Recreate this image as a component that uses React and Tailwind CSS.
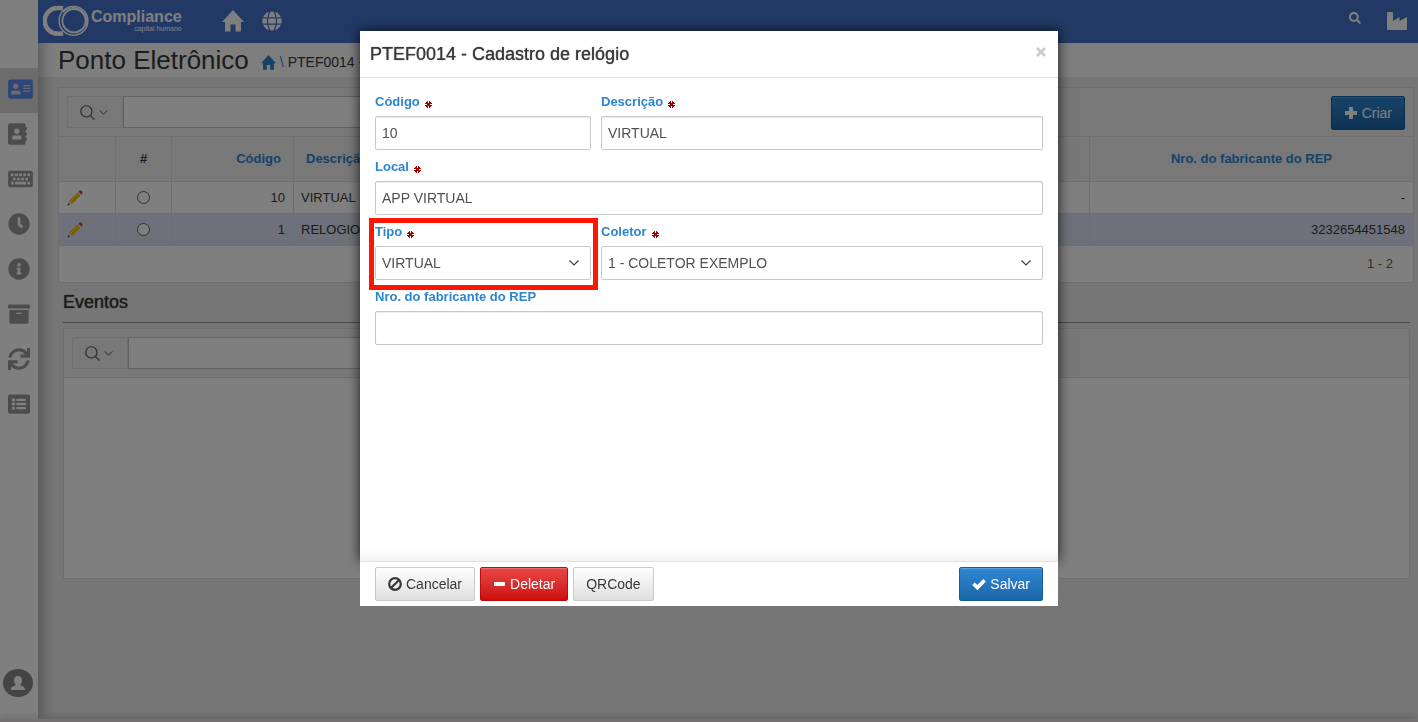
import {
  FaAddressBook,
  FaAddressCard,
  FaArchive,
  FaClock,
  FaGlobe,
  FaInfoCircle,
  FaKeyboard,
  FaListAlt,
  FaSearch,
  FaSync,
} from "react-icons/fa";

const menu = [
  { name: "Cadastros", icon: FaAddressCard, size: "h-[22px] w-[25px]", active: true },
  { name: "Contatos", icon: FaAddressBook, size: "h-[22px] w-[19px]" },
  { name: "Digitação", icon: FaKeyboard, size: "h-[22px] w-[25px]" },
  { name: "Horários", icon: FaClock, size: "h-[22px] w-[22px]" },
  { name: "Informações", icon: FaInfoCircle, size: "h-[22px] w-[22px]" },
  { name: "Arquivo", icon: FaArchive, size: "h-[22px] w-[22px]" },
  { name: "Sincronizar", icon: FaSync, size: "h-[22px] w-[22px]" },
  { name: "Listas", icon: FaListAlt, size: "h-[22px] w-[22px]" },
];

const rows = [
  { code: 10, name: "VIRTUAL", rep: "-" },
  { code: 1, name: "RELOGIO", rep: "3232654451548", selected: true },
];

function HomeIcon({ className }) {
  return (
    <svg viewBox="0 0 22 22" fill="currentColor" className={className}>
      <path d="M11 0 L22 12 H19 V21.5 H13.5 V14.5 H8.5 V21.5 H3 V12 H0 Z" />
    </svg>
  );
}

function Chevron({ className }) {
  return (
    <svg viewBox="0 0 10 6" fill="none" stroke="currentColor" strokeWidth="1.2" className={className}>
      <path d="M0.5 0.5 L5 5 L9.5 0.5" />
    </svg>
  );
}

function Logo() {
  return (
    <div className="flex items-center text-white">
      <svg viewBox="0 0 46 32" fill="none" stroke="currentColor" className="h-8 w-[46px]">
        <path d="M20 3.2 Q17.5 2.8 14.5 3 A12.8 12.8 0 0 0 14.5 28.6 Q17.5 28.8 20 28.2" strokeWidth="4.5" />
        <circle cx="30.5" cy="15.8" r="14.4" strokeWidth="1.4" />
        <circle cx="31" cy="15.8" r="11.6" strokeWidth="1.8" />
        <path d="M20 7 A14 14 0 0 1 43 22" strokeWidth="1.4" />
      </svg>
      <div className="ml-0.5 text-right">
        <div className="text-[16px] font-bold leading-4">Compliance</div>
        <div className="text-[7px] leading-[7px]">capital humano</div>
      </div>
    </div>
  );
}

function Pencil() {
  return (
    <svg viewBox="0 0 16 16" className="h-4 w-4">
      <path d="M1 15 L2.5 10.5 L5.5 13.5 Z" fill="#f0cf8c" />
      <path d="M0.5 15.5 L1.2 13.2 L2.8 14.8 Z" fill="#25304f" />
      <path d="M2.5 10.5 L10.5 2.5 L13.5 5.5 L5.5 13.5 Z" fill="#f5b800" />
      <path d="M3.5 11.5 L11.5 3.5" stroke="#ffd95a" strokeWidth="1" />
      <path d="M10.5 2.5 L11.5 1.5 L14.5 4.5 L13.5 5.5 Z" fill="#d8d8d8" />
      <path d="M11.5 1.5 L12.7 0.6 Q15.8 0.3 15.4 3.4 L14.5 4.5 Z" fill="#f03020" />
    </svg>
  );
}

function Required() {
  return (
    <svg viewBox="0 0 7 7" fill="#a00000" shapeRendering="crispEdges" className="mt-1 h-[7px] w-[7px]">
      <path d="M2 0h1v7h-1z M4 0h1v7h-1z M0 2h7v1h-7z M0 4h7v1h-7z M3 3h1v1h-1z M1 1h1v1h-1z M5 1h1v1h-1z M1 5h1v1h-1z M5 5h1v1h-1z" />
    </svg>
  );
}

function SearchBar({ label, children }) {
  return (
    <div className="flex h-[49px] items-start justify-between border-b border-[#dddddd] bg-[#f0f0f0] px-2 pt-2">
      <div className="flex h-8 w-1/2">
        <button
          type="button"
          aria-label={`Opções de ${label}`}
          className="flex w-14 items-center justify-center gap-1 rounded-l-xs border border-[#dddddd] pr-0.5 text-[#505050]"
        >
          <svg viewBox="0 0 16 16" fill="none" stroke="currentColor" strokeWidth="1.2" className="h-[15px] w-[15px]">
            <circle cx="6.8" cy="6.8" r="6" />
            <path d="M11 11 L15.5 15.5" />
          </svg>
          <Chevron className="h-[5px] w-[9px]" />
        </button>
        <input
          type="text"
          aria-label={label}
          className="min-w-0 flex-1 border border-[#c4c4c4] bg-white px-2 text-[14px]"
        />
      </div>
      {children}
    </div>
  );
}

function Field({ id, label, required, wide, full, highlight, children }) {
  return (
    <div className={`relative ${full ? "col-span-3" : wide ? "col-span-2" : ""}`}>
      {highlight && (
        <div className="pointer-events-none absolute -top-1 -right-[7px] -bottom-2.5 -left-1.5 border-5 border-[#ff1500]" />
      )}
      <label htmlFor={id} className="mb-1 flex h-5 items-center gap-[5px] text-[13px] font-bold text-[#2d85d0]">
        {label}
        {required && <Required />}
      </label>
      {children}
    </div>
  );
}

function TextInput({ id, value }) {
  return (
    <input
      id={id}
      type="text"
      defaultValue={value}
      className="block h-[34px] w-full rounded-xs border border-[#c8c8c8] bg-white px-1.5 text-[14px] text-[#505050] shadow-[inset_0_1px_1px_#eeeeee]"
    />
  );
}

function SelectInput({ id, value }) {
  return (
    <div className="relative">
      <select
        id={id}
        defaultValue={value}
        className="block h-[34px] w-full appearance-none rounded-xs border border-[#c8c8c8] bg-white px-1.5 text-[14px] text-[#505050]"
      >
        <option>{value}</option>
      </select>
      <Chevron className="pointer-events-none absolute top-3.5 right-3 h-1.5 w-2.5 text-[#404040]" />
    </div>
  );
}

const button = "flex h-[34px] items-center gap-1 rounded-xs border px-3 text-[14px]";
const plain = "border-[#c9c9c9] bg-linear-to-b from-white to-[#dfdfdf] text-[#383838]";
const primary =
  "border-[#145c9c] bg-linear-to-b from-[#2f87d3] to-[#1b66a8] text-white shadow-[inset_0_1px_0_#5a9fdb]";
const danger =
  "border-[#bf0b0b] bg-linear-to-b from-[#e84545] to-[#cc0a0a] text-white shadow-[inset_0_1px_0_#ee6a6a]";

function Sidebar() {
  return (
    <aside className="z-10 flex w-[38px] shrink-0 flex-col bg-white shadow-[4px_0_14px_rgba(0,0,0,0.3)]">
      <nav className="pt-[68px]">
        {menu.map(({ name, icon: Icon, size, active }) => (
          <a
            key={name}
            href="#"
            aria-label={name}
            className={`flex h-[45px] items-center pb-1 pl-2 ${active ? "bg-[#d8d8d8] text-[#5b8def]" : "text-[#999999]"}`}
          >
            <Icon className={size} />
          </a>
        ))}
      </nav>
      <a href="#" aria-label="Usuário" className="mt-auto mb-[22px] ml-[3px]">
        <svg viewBox="0 0 30 28" className="h-7 w-[30px]">
          <ellipse cx="15" cy="14" rx="15" ry="14" fill="#888888" />
          <path
            d="M15 7 C17.8 7 19 9 19 11.5 C19 13.5 18.2 15 17.2 15.8 C17.2 17 22 17.5 22 20 V21 H8 V20 C8 17.5 12.8 17 12.8 15.8 C11.8 15 11 13.5 11 11.5 C11 9 12.2 7 15 7 Z"
            fill="#ffffff"
          />
        </svg>
      </a>
    </aside>
  );
}

function TopBar() {
  return (
    <header className="flex h-[43px] items-center bg-[#4473cc] pr-[11px] pb-0.5 pl-[5px] text-white">
      <Logo />
      <a href="#" aria-label="Início" className="ml-10">
        <HomeIcon className="h-[22px] w-[22px]" />
      </a>
      <a href="#" aria-label="Idioma" className="ml-[18px]">
        <FaGlobe className="h-5 w-5" />
      </a>
      <button type="button" aria-label="Pesquisar" className="mr-[26px] mb-1.5 ml-auto">
        <FaSearch className="h-3 w-3" />
      </button>
      <a href="#" aria-label="Empresa">
        <svg viewBox="0 0 20 18" fill="currentColor" className="h-[18px] w-5">
          <path d="M1 0 H5 Q6 0 6 1 V9 L12.5 5 V9 L20 5 V17 Q20 18 19 18 H1 Q0 18 0 17 V1 Q0 0 1 0 Z" />
        </svg>
      </a>
    </header>
  );
}

function ClockTable() {
  const line = "border-r border-b border-[#dddddd]";
  return (
    <table className="w-full table-fixed border-separate border-spacing-0 text-[13px] text-[#383838]">
      <thead>
        <tr className="h-[45px] bg-[#f0f0f0]">
          <th className={`${line} w-[57px]`}></th>
          <th className={`${line} w-14`}>#</th>
          <th className={`${line} w-[122px] pr-3 text-right text-[#2d85d0]`}>Código</th>
          <th className={`${line} pl-3 text-left text-[#2d85d0]`}>Descrição</th>
          <th className="w-[323px] border-b border-[#dddddd] text-[#2d85d0]">Nro. do fabricante do REP</th>
        </tr>
      </thead>
      <tbody>
        {rows.map((row) => (
          <tr key={row.code} className={`h-8 ${row.selected ? "bg-[#dce3f2]" : "bg-white"}`}>
            <td className={`${line} pl-2`}>
              <a href="#" aria-label={`Editar ${row.name}`}>
                <Pencil />
              </a>
            </td>
            <td className={line}>
              <input
                type="radio"
                name="relogio"
                aria-label={row.name}
                className="mx-auto block h-[13px] w-[13px] appearance-none rounded-full border border-[#606060] bg-white"
              />
            </td>
            <td className={`${line} pr-2 text-right`}>{row.code}</td>
            <td className={`${line} pl-[7px]`}>{row.name}</td>
            <td className="border-b border-[#dddddd] pr-2 text-right">{row.rep}</td>
          </tr>
        ))}
      </tbody>
    </table>
  );
}

function ClockDialog() {
  return (
    <div
      role="dialog"
      aria-modal="true"
      aria-labelledby="dialog-title"
      className="w-full max-w-[698px] text-[14px]"
    >
      <div className="bg-white shadow-[0_0_12px_rgba(0,0,0,0.8)]">
        <div className="flex h-[47px] items-center justify-between border-b border-[#e2e2e2] pr-3 pl-2.5">
          <h2 id="dialog-title" className="text-[18px] text-[#383838] text-shadow-[0_0_1px_#383838]">
            PTEF0014 - Cadastro de relógio
          </h2>
          <button type="button" aria-label="Fechar" className="mb-1 text-[#cccccc]">
            <svg viewBox="0 0 10 10" stroke="currentColor" strokeWidth="2.8" className="h-2.5 w-2.5">
              <path d="M1 1 L9 9 M9 1 L1 9" />
            </svg>
          </button>
        </div>
        <form className="grid min-h-[483px] grid-cols-3 content-start gap-x-2.5 gap-y-[7px] bg-linear-to-t from-[#f2f2f2] to-white to-[12px] px-[15px] pt-3.5">
          <Field id="codigo" label="Código" required>
            <TextInput id="codigo" value="10" />
          </Field>
          <Field id="descricao" label="Descrição" required wide>
            <TextInput id="descricao" value="VIRTUAL" />
          </Field>
          <Field id="local" label="Local" required full>
            <TextInput id="local" value="APP VIRTUAL" />
          </Field>
          <Field id="tipo" label="Tipo" required highlight>
            <SelectInput id="tipo" value="VIRTUAL" />
          </Field>
          <Field id="coletor" label="Coletor" required wide>
            <SelectInput id="coletor" value="1 - COLETOR EXEMPLO" />
          </Field>
          <Field id="rep" label="Nro. do fabricante do REP" full>
            <TextInput id="rep" value="" />
          </Field>
        </form>
      </div>
      <div className="relative flex gap-[5px] border-t border-[#e2e2e2] bg-white px-[15px] py-[5px]">
        <button type="button" className={`${button} ${plain}`}>
          <svg viewBox="0 0 14 14" fill="none" stroke="currentColor" strokeWidth="2.2" className="h-3.5 w-3.5">
            <circle cx="7" cy="7" r="5.8" />
            <path d="M3.2 10.8 L10.8 3.2" />
          </svg>
          Cancelar
        </button>
        <button type="button" className={`${button} ${danger}`}>
          <svg viewBox="0 0 13 14" fill="currentColor" className="h-3.5 w-[13px]">
            <rect x="1" y="5" width="11" height="4" rx="1" />
          </svg>
          Deletar
        </button>
        <button type="button" className={`${button} ${plain}`}>
          QRCode
        </button>
        <button type="button" className={`${button} ${primary} ml-auto`}>
          <svg viewBox="0 0 14 14" fill="none" stroke="currentColor" strokeWidth="3.6" className="h-3.5 w-3.5">
            <path d="M1.5 6.8 L5.4 10.6 L12.6 3.2" />
          </svg>
          Salvar
        </button>
      </div>
    </div>
  );
}

export default function App() {
  return (
    <div className="flex min-h-screen flex-col bg-[#ececee] font-['Liberation_Sans',Arial,sans-serif] text-[#383838]">
      <div className="flex flex-1">
        <Sidebar />
        <div className="min-w-0 flex-1">
          <div className="relative z-20">
            <TopBar />
          </div>
          <div className="flex h-[34px] items-center bg-[#fdfdfd] pl-5">
            <h1 className="text-[26px] leading-8">Ponto Eletrônico</h1>
            <nav className="mt-1 ml-3 flex items-center gap-1 text-[14px]">
              <a href="#" aria-label="Início" className="text-[#2d85d0]">
                <HomeIcon className="h-[15px] w-[15px]" />
              </a>
              <span className="text-[#2d85d0]">\</span>
              <span>PTEF0014 -</span>
            </nav>
          </div>
          <main className="pt-2.5 pr-1 pl-5">
            <section className="border border-[#dddddd] bg-white">
              <SearchBar label="Pesquisar relógios">
                <button type="button" className={`${button} ${primary}`}>
                  <svg viewBox="0 0 14 14" fill="currentColor" className="h-3.5 w-3.5">
                    <path d="M5 1 h4 v4 h4 v4 h-4 v4 h-4 v-4 h-4 v-4 h4 Z" />
                  </svg>
                  Criar
                </button>
              </SearchBar>
              <ClockTable />
              <div className="flex h-9 items-center justify-end pr-5 text-[13px] text-[#606060]">1 - 2</div>
            </section>
            <div className="pr-1 pl-[5px]">
              <h2 className="mb-[5px] flex h-10 items-center border-b border-[#909090] text-[18px] text-shadow-[0_0_1px_#383838]">
                Eventos
              </h2>
              <section className="min-h-[251px] border border-[#dddddd] bg-white">
                <SearchBar label="Pesquisar eventos" />
              </section>
            </div>
          </main>
        </div>
      </div>
      <footer className="z-20 h-[3px] bg-[#e6e2e4] shadow-[0_-2px_6px_rgba(0,0,0,0.25)]" />
      <div className="fixed inset-0 z-30 flex flex-col items-center bg-black/50 pt-[31px]">
        <ClockDialog />
      </div>
    </div>
  );
}
